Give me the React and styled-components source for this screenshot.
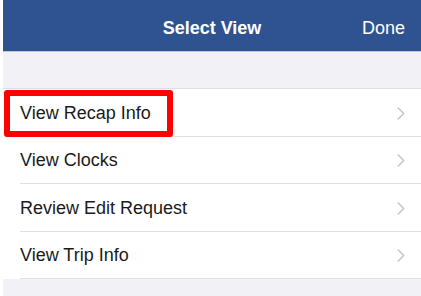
import React from 'react'
import styled, { createGlobalStyle } from 'styled-components'

const GlobalStyle = createGlobalStyle`
  html, body {
    margin: 0;
    padding: 0;
    background: #ffffff;
  }
  body {
    font-family: "Liberation Sans", Arial, sans-serif;
    -webkit-font-smoothing: antialiased;
  }
`

const Screen = styled.div`
  width: 421px;
  height: 296px;
  padding-left: 3px;
  box-sizing: border-box;
  background: #ffffff;
  overflow: hidden;
`

const Panel = styled.div`
  height: 100%;
  background: #f1f1f6;
  display: flex;
  flex-direction: column;
`

const NavBar = styled.header`
  height: 52px;
  flex-shrink: 0;
  box-sizing: border-box;
  padding-top: 5px;
  background: #2f5391;
  border-bottom: 1px solid #c3c6d2;
  display: grid;
  grid-template-columns: 1fr auto 1fr;
  align-items: center;
  color: #ffffff;
`

const Title = styled.h1`
  grid-column: 2;
  margin: 0;
  font-size: 18px;
  font-weight: 700;
`

const NavButton = styled.button`
  justify-self: end;
  margin-right: 16px;
  padding: 0;
  border: 0;
  background: none;
  color: #ffffff;
  font: inherit;
  font-size: 18px;
`

const Spacer = styled.div`
  height: 36px;
  flex-shrink: 0;
  border-bottom: 1px solid #dedee3;
`

const List = styled.ul`
  list-style: none;
  margin: 0;
  padding: 0 0 0 17px;
  background: #ffffff;
`

const Row = styled.li`
  position: relative;
  height: 47.5px;
  box-sizing: border-box;
  display: flex;
  align-items: center;
  padding: 2px 16px 0 0;
  border-bottom: 1px solid #e1e1e5;
  font-size: 18px;
  color: #1a1a1a;
`

const Label = styled.span`
  flex: 1;
`

const Highlight = styled.div`
  position: absolute;
  left: -16px;
  top: 1px;
  width: 169px;
  height: 47px;
  box-sizing: border-box;
  border: 6px solid #ff0000;
  border-radius: 3px;
  pointer-events: none;
`

const Chevron = () => (
  <svg width="8" height="13" viewBox="0 0 8 13" fill="none">
    <path d="M1.2 1l5.5 5.5L1.2 12" stroke="#c4c4c9" strokeWidth="1.6" strokeLinecap="round" strokeLinejoin="round" />
  </svg>
)

const items = ['View Recap Info', 'View Clocks', 'Review Edit Request', 'View Trip Info']

const App = () => {
  return (
    <Screen>
      <GlobalStyle />
      <Panel>
        <NavBar>
          <Title>Select View</Title>
          <NavButton>Done</NavButton>
        </NavBar>
        <Spacer />
        <List>
          {items.map((item, i) => (
            <Row key={item}>
              <Label>{item}</Label>
              <Chevron />
              {i === 0 && <Highlight />}
            </Row>
          ))}
        </List>
      </Panel>
    </Screen>
  )
}

export default App
